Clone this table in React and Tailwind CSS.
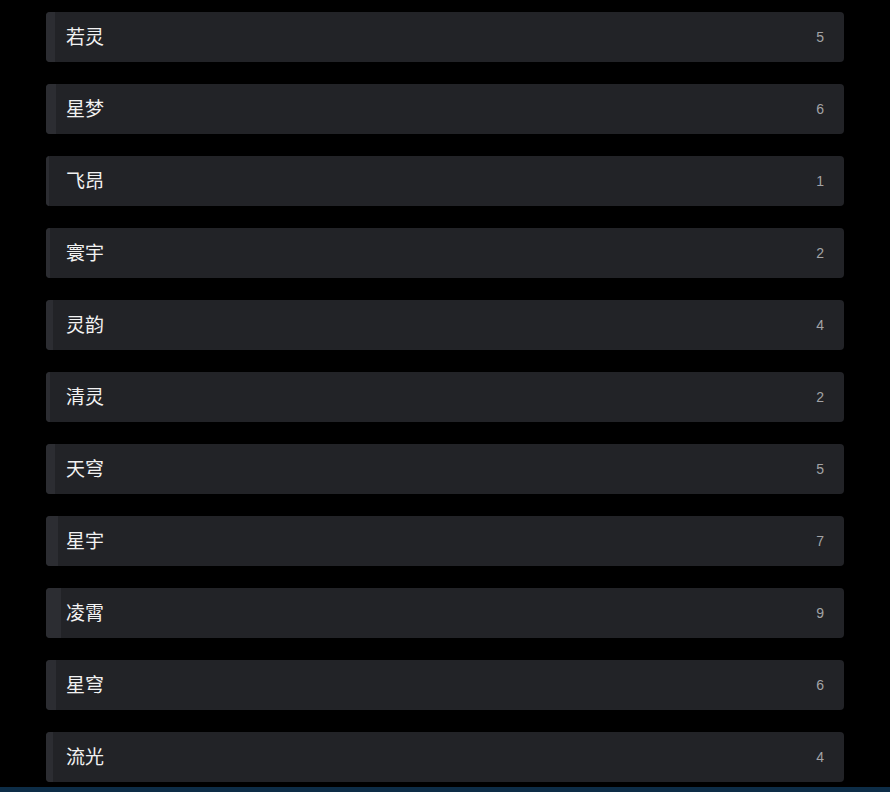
import React from 'react'

const items = [
  { name: '若灵', count: 5 },
  { name: '星梦', count: 6 },
  { name: '飞昂', count: 1 },
  { name: '寰宇', count: 2 },
  { name: '灵韵', count: 4 },
  { name: '清灵', count: 2 },
  { name: '天穹', count: 5 },
  { name: '星宇', count: 7 },
  { name: '凌霄', count: 9 },
  { name: '星穹', count: 6 },
  { name: '流光', count: 4 },
]

export default function App(){
  return (
    <div className="min-h-screen bg-black" style={{ fontFamily: '"Liberation Sans", "Noto Sans CJK SC", sans-serif' }}>
      <div className="flex flex-col gap-[22px] pt-3 pl-[46px] pr-[46px]">
        {items.map((it, i) => (
          <div key={i} className="relative flex items-center justify-between h-[50px] rounded bg-[#222327] overflow-hidden pl-5 pr-5">
            <div className="absolute left-0 top-0 bottom-0 bg-[#2c2d32]" style={{ width: Math.round(it.count * 1.5) + 1 }} />
            <span className="relative top-px text-[19px] text-[#f2f2f2]">{it.name}</span>
            <span className="relative text-sm text-[#a3a3a6]">{it.count}</span>
          </div>
        ))}
      </div>
      <div className="mt-[5px] h-10 bg-[#0d2d47]" />
    </div>
  )
}
